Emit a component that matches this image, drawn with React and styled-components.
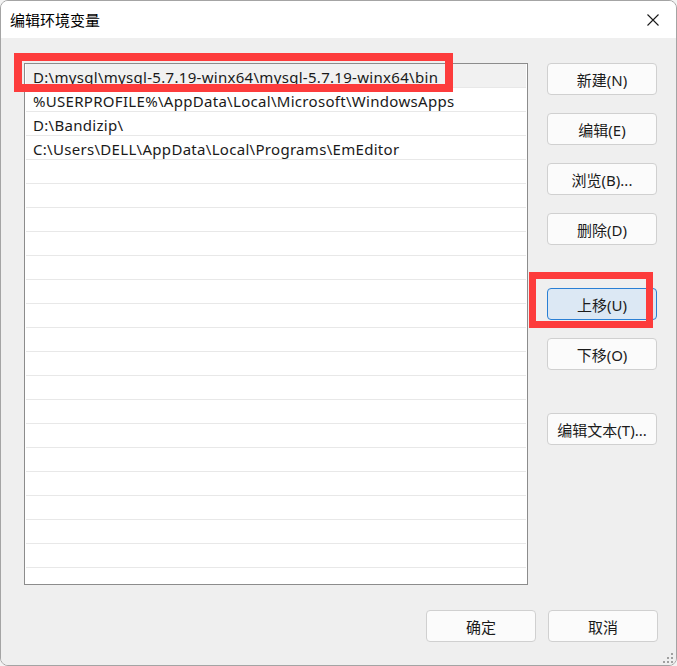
import styled, { createGlobalStyle } from "styled-components";

const GlobalStyle = createGlobalStyle`
  html, body {
    margin: 0;
    padding: 0;
    background: #f3f3f3;
  }
  * {
    box-sizing: border-box;
  }
`;

const paths = [
  "D:\\mysql\\mysql-5.7.19-winx64\\mysql-5.7.19-winx64\\bin",
  "%USERPROFILE%\\AppData\\Local\\Microsoft\\WindowsApps",
  "D:\\Bandizip\\",
  "C:\\Users\\DELL\\AppData\\Local\\Programs\\EmEditor",
];

const rows = Array.from({ length: 22 }, (_, i) => paths[i] || "");

const sideButtons = [
  { label: "新建(N)" },
  { label: "编辑(E)" },
  { label: "浏览(B)..." },
  { label: "删除(D)" },
  { label: "上移(U)", wide: true, active: true },
  { label: "下移(O)" },
  { label: "编辑文本(T)...", wide: true },
];

const App = () => {
  return (
    <>
      <GlobalStyle />
      <Window>
        <TitleBar>
          <Title>编辑环境变量</Title>
          <CloseBtn>
            <svg width="12" height="12" viewBox="0 0 12 12">
              <path d="M0.5 0.5 L11.5 11.5 M11.5 0.5 L0.5 11.5" stroke="#1a1a1a" strokeWidth="1.1" />
            </svg>
          </CloseBtn>
        </TitleBar>
        <Body>
          <Main>
            <List>
              {rows.map((text, i) => (
                <Row key={i} $selected={i === 0}>{text}</Row>
              ))}
            </List>
            <Side>
              {sideButtons.map((b) => (
                <Btn key={b.label} $spaced={b.wide} $active={b.active}>{b.label}</Btn>
              ))}
            </Side>
          </Main>
          <Footer>
            <Btn>确定</Btn>
            <Btn>取消</Btn>
          </Footer>
        </Body>
        <Mark $left={13} $top={52} $width={439} $height={39} $stroke={8} />
        <Mark $left={528} $top={271} $width={124} $height={56} $stroke={7} />
        <Grip>
          <svg width="12" height="12" viewBox="0 0 12 12">
            <rect x="9" y="1" width="2" height="2" fill="#a0a0a0" />
            <rect x="5" y="5" width="2" height="2" fill="#a0a0a0" />
            <rect x="9" y="5" width="2" height="2" fill="#a0a0a0" />
            <rect x="1" y="9" width="2" height="2" fill="#a0a0a0" />
            <rect x="5" y="9" width="2" height="2" fill="#a0a0a0" />
            <rect x="9" y="9" width="2" height="2" fill="#a0a0a0" />
          </svg>
        </Grip>
      </Window>
    </>
  );
};

export default App;

const Window = styled.div`
  position: relative;
  width: 677px;
  height: 666px;
  border: 1px solid #a4a4a4;
  border-radius: 8px;
  overflow: hidden;
  display: flex;
  flex-direction: column;
  font-family: "Noto Sans", "Noto Sans CJK SC", sans-serif;
  color: #1a1a1a;
`;

const TitleBar = styled.div`
  height: 37px;
  background: #ffffff;
  display: flex;
  align-items: center;
  justify-content: space-between;
  padding-left: 9px;
`;

const Title = styled.div`
  font-family: "Noto Sans CJK SC", sans-serif;
  font-size: 15px;
  color: #000;
`;

const CloseBtn = styled.div`
  width: 46px;
  height: 37px;
  display: flex;
  align-items: center;
  justify-content: center;
`;

const Body = styled.div`
  flex: 1;
  background: #efefef;
  padding: 25px 18px 0 23px;
  display: flex;
  flex-direction: column;
`;

const Main = styled.div`
  display: flex;
  gap: 19px;
`;

const List = styled.div`
  width: 504px;
  height: 522px;
  border: 1px solid #8c8c8c;
  background: #ffffff;
  overflow: hidden;
`;

const Row = styled.div`
  height: 24px;
  margin: 0 1px;
  padding: 3px 0 0 7px;
  border-bottom: 1px solid #e8e8e8;
  background: ${(p) => (p.$selected ? "#f1f1f1" : "transparent")};
  font-size: 15px;
  letter-spacing: 0.3px;
  line-height: 20px;
  white-space: nowrap;
`;

const Side = styled.div`
  display: flex;
  flex-direction: column;
  gap: 18px;
`;

const Btn = styled.div`
  width: 110px;
  height: 32px;
  margin-top: ${(p) => (p.$spaced ? "25px" : "0")};
  border: 1px solid ${(p) => (p.$active ? "#2a7fd4" : "#d0d0d0")};
  border-radius: 4px;
  background: ${(p) => (p.$active ? "#dce8f4" : "#fbfbfb")};
  display: flex;
  align-items: center;
  justify-content: center;
  font-size: 15px;
  color: #1b1b1b;
`;

const Footer = styled.div`
  display: flex;
  justify-content: flex-end;
  gap: 12px;
  margin-top: 25px;
`;

const Mark = styled.div`
  position: absolute;
  left: ${(p) => p.$left}px;
  top: ${(p) => p.$top}px;
  width: ${(p) => p.$width}px;
  height: ${(p) => p.$height}px;
  border: ${(p) => p.$stroke}px solid #fd3c3c;
  pointer-events: none;
`;

const Grip = styled.div`
  position: absolute;
  right: 2px;
  bottom: 1px;
  width: 12px;
  height: 12px;
  display: flex;
`;
